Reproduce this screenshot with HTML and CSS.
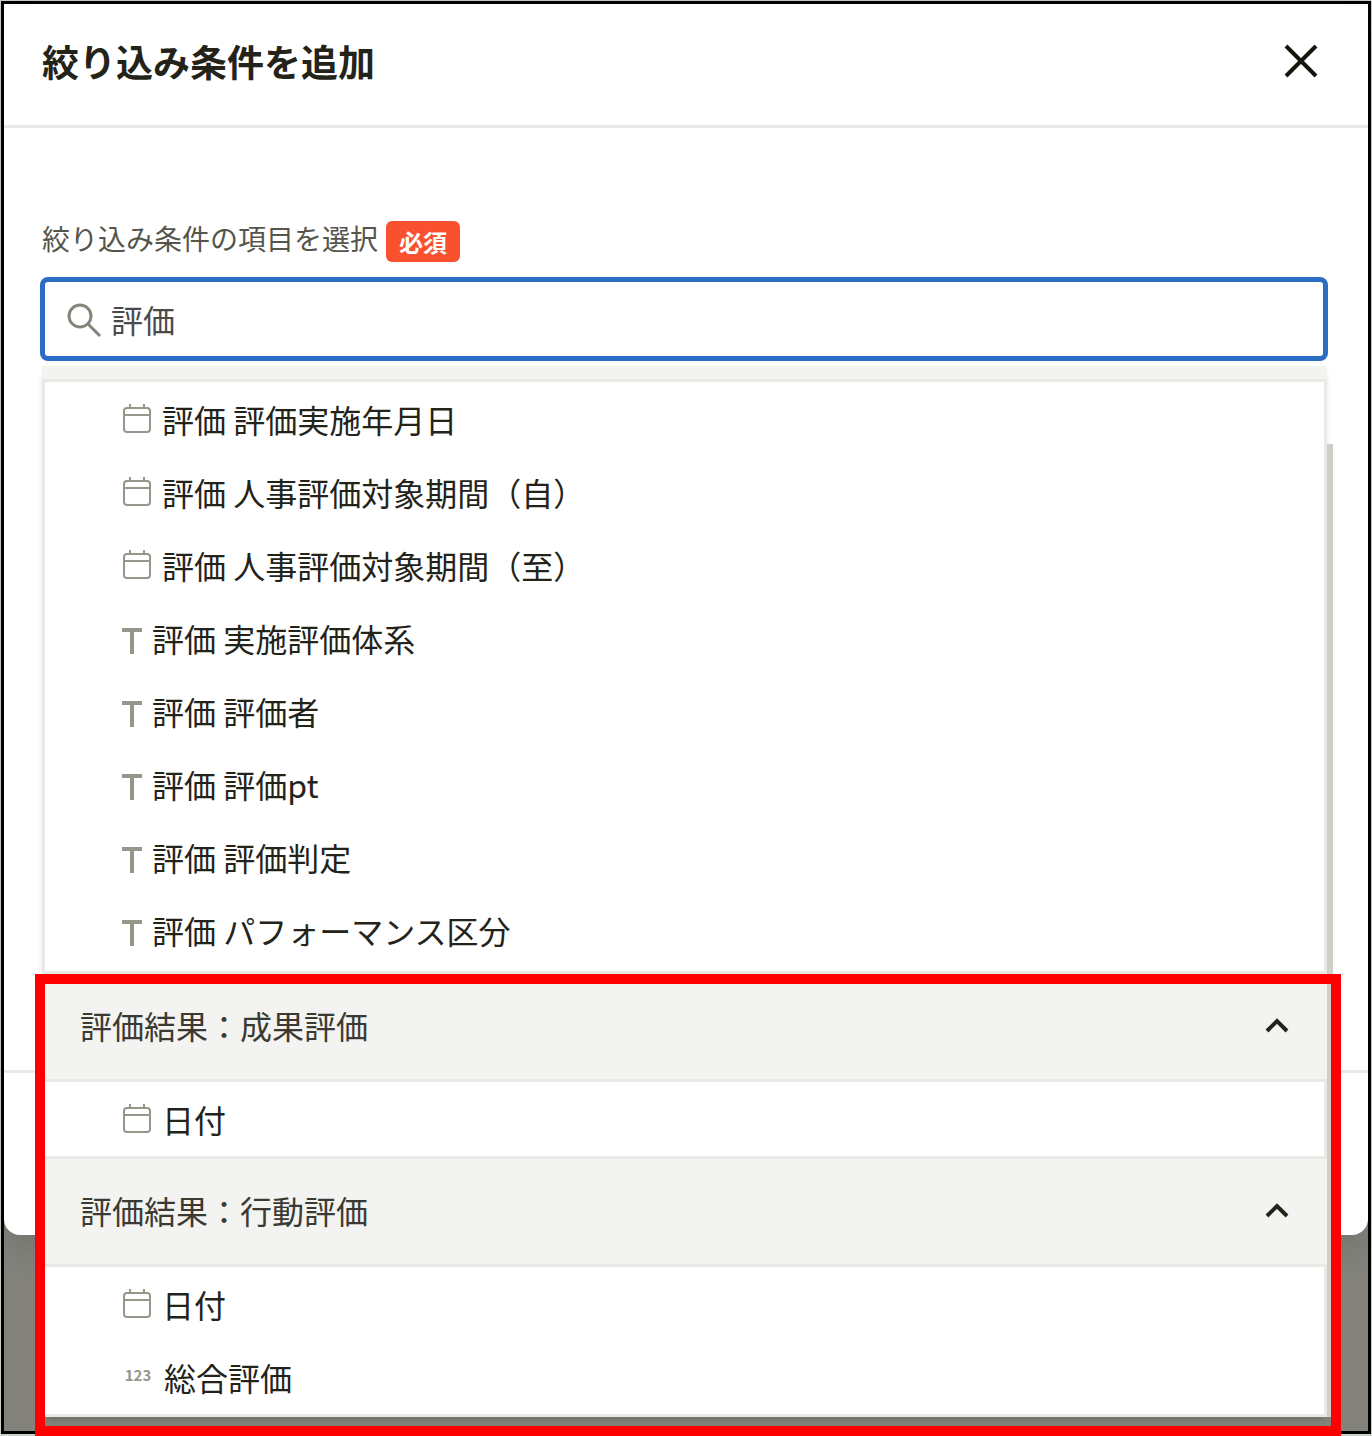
FILE: index.html
```html
<!DOCTYPE html>
<html lang="ja">
<head>
    <meta charset="UTF-8">
    <meta name="viewport" content="width=device-width, initial-scale=1.0">
    <title>絞り込み条件を追加</title>
    <link rel="stylesheet" href="styles.css">
</head>
<body>
    <!-- shared icons -->
    <svg class="sprite" aria-hidden="true">
        <symbol id="icon-calendar" viewBox="0 0 30 32">
            <path d="M5 5h20q3 0 3 3v18q0 3-3 3H5q-3 0-3-3V8q0-3 3-3zM2 12h26M8 1v4M22 1v4" fill="none" stroke="currentColor" stroke-width="2"/>
        </symbol>
        <symbol id="icon-text" viewBox="0 0 20 32">
            <path d="M0 8h20M10 8v24" fill="none" stroke="currentColor" stroke-width="4"/>
        </symbol>
        <symbol id="icon-chevron" viewBox="0 0 24 16">
            <path d="M2 14L12 4l10 10" fill="none" stroke="currentColor" stroke-width="4"/>
        </symbol>
    </svg>

    <div class="screen">
        <div class="dialog" role="dialog" aria-labelledby="dialogTitle">
            <header class="dialog-header">
                <h1 id="dialogTitle">絞り込み条件を追加</h1>
                <button type="button" class="close" aria-label="閉じる">
                    <svg width="34" height="34" viewBox="0 0 34 34"><path d="M2 2l30 30M32 2L2 32" stroke="currentColor" stroke-width="4"/></svg>
                </button>
            </header>

            <div class="dialog-body">
                <div class="field-label">
                    <label for="itemSearch">絞り込み条件の項目を選択</label>
                    <span class="badge">必須</span>
                </div>
                <div class="combo">
                    <div class="search-box">
                        <svg width="36" height="36" viewBox="0 0 36 36"><circle cx="13" cy="15" r="11" fill="none" stroke="currentColor" stroke-width="3"/><path d="M21 23l12 12" stroke="currentColor" stroke-width="3"/></svg>
                        <input type="text" id="itemSearch" value="評価" autocomplete="off">
                    </div>

                    <div class="menu">
                        <div class="group">
                            <div class="group-edge"></div>
                            <ul class="options" role="listbox" aria-label="評価">
                                <li role="option"><svg class="icon"><use href="#icon-calendar"/></svg>評価 評価実施年月日</li>
                                <li role="option"><svg class="icon"><use href="#icon-calendar"/></svg>評価 人事評価対象期間（自）</li>
                                <li role="option"><svg class="icon"><use href="#icon-calendar"/></svg>評価 人事評価対象期間（至）</li>
                                <li role="option"><svg class="icon icon-text"><use href="#icon-text"/></svg>評価 実施評価体系</li>
                                <li role="option"><svg class="icon icon-text"><use href="#icon-text"/></svg>評価 評価者</li>
                                <li role="option"><svg class="icon icon-text"><use href="#icon-text"/></svg>評価 評価pt</li>
                                <li role="option"><svg class="icon icon-text"><use href="#icon-text"/></svg>評価 評価判定</li>
                                <li role="option"><svg class="icon icon-text"><use href="#icon-text"/></svg>評価 パフォーマンス区分</li>
                            </ul>
                        </div>

                        <div class="highlight">
                            <div class="group">
                                <button type="button" class="group-header" aria-expanded="true">
                                    評価結果：成果評価
                                    <svg class="chevron"><use href="#icon-chevron"/></svg>
                                </button>
                                <ul class="options" role="listbox" aria-label="評価結果：成果評価">
                                    <li role="option"><svg class="icon"><use href="#icon-calendar"/></svg>日付</li>
                                </ul>
                            </div>
                            <div class="group">
                                <button type="button" class="group-header" aria-expanded="true">
                                    評価結果：行動評価
                                    <svg class="chevron"><use href="#icon-chevron"/></svg>
                                </button>
                                <ul class="options" role="listbox" aria-label="評価結果：行動評価">
                                    <li role="option"><svg class="icon"><use href="#icon-calendar"/></svg>日付</li>
                                    <li role="option"><span class="icon icon-number">123</span>総合評価</li>
                                </ul>
                            </div>
                        </div>
                    </div>
                </div>
            </div>

            <footer class="dialog-footer"></footer>
        </div>
    </div>
</body>
</html>
```
FILE: styles.css
```css
* {
    box-sizing: border-box;
}
body {
    margin: 0;
    padding: 1px 1px 2px;
    background-color: #cdd2cd;
    font-family: "Noto Sans CJK JP", sans-serif;
    color: #23231a;
}
button, input {
    font: inherit;
    color: inherit;
    border: none;
    background: none;
    padding: 0;
}
.sprite {
    position: absolute;
    width: 0;
    height: 0;
}
.screen {
    display: flex;
    flex-direction: column;
    min-height: calc(100vh - 3px);
    padding-bottom: 196px;
    border: 3px solid #000;
    background-color: #83837c;
}
.dialog {
    flex: 1;
    display: flex;
    flex-direction: column;
    background-color: #fff;
    border-radius: 0 0 16px 16px;
    box-shadow: 0 8px 40px rgba(0, 0, 0, 0.15);
}
.dialog-header {
    display: flex;
    justify-content: space-between;
    align-items: center;
    height: 124px;
    padding: 0 50px 8px 38px;
    border-bottom: 3px solid #e9e9e6;
}
h1 {
    margin: 0;
    font-size: 37px;
    font-weight: bold;
}
.close {
    display: flex;
    color: #15150c;
    cursor: pointer;
}
.dialog-body {
    flex: 1;
    padding: 93px 40px 0 36px;
}
.field-label {
    display: flex;
    align-items: flex-start;
    gap: 8px;
    height: 41px;
    margin-bottom: 15px;
    padding-left: 2px;
    font-size: 28px;
    line-height: 34px;
    color: #55554b;
}
.badge {
    padding: 0 13px;
    border-radius: 6px;
    background-color: #f9502f;
    color: #fff;
    font-size: 24px;
    font-weight: bold;
    line-height: 41px;
}
.combo {
    position: relative;
}
.search-box {
    display: flex;
    align-items: center;
    gap: 8px;
    height: 84px;
    padding: 0 22px;
    border: 5px solid #2b6cc4;
    border-radius: 8px;
    color: #85857a;
}
.search-box input {
    flex: 1;
    outline: none;
    font-size: 32px;
    line-height: 48px;
    color: #4a4a4a;
}
.menu {
    position: absolute;
    top: 89px;
    left: 2px;
    right: 1px;
    background-color: #fff;
    box-shadow: 0 4px 8px -4px rgba(0, 0, 0, 0.3);
}
/* side shadow of the menu */
.menu::before {
    content: "";
    position: absolute;
    top: 78px;
    right: -6px;
    bottom: 0;
    width: 6px;
    background-color: #cfcfc7;
}
.group-edge {
    height: 13px;
    background-color: #f3f3f1;
}
.group-header {
    display: flex;
    justify-content: space-between;
    align-items: center;
    width: 100%;
    height: 105px;
    padding: 0 38px 4px;
    background-color: #f3f3f1;
    font-size: 32px;
    color: #3a3a32;
    cursor: pointer;
}
.chevron {
    width: 24px;
    height: 16px;
    color: #23231a;
}
.options {
    margin: 0;
    padding: 3px 0 4px;
    list-style: none;
    box-shadow: inset 0 0 0 3px #e9e9e6;
}
.menu > .group .options {
    padding-bottom: 8px;
}
.options li {
    display: flex;
    align-items: center;
    gap: 10px;
    height: 73px;
    padding-left: 80px;
    font-size: 32px;
    white-space: pre;
}
.icon {
    flex: none;
    width: 30px;
    height: 32px;
    color: #96968a;
}
.icon-text {
    width: 20px;
}
.icon-number {
    width: 32px;
    font-size: 15px;
    font-weight: bold;
    line-height: 28px;
    text-align: center;
}
.highlight {
    position: relative;
}
.highlight::after {
    content: "";
    position: absolute;
    top: 0;
    left: -7px;
    right: -14px;
    bottom: -19px;
    border: 10px solid #f00;
    pointer-events: none;
}
.dialog-footer {
    height: 165px;
    border-top: 3px solid #e9e9e6;
}
```
